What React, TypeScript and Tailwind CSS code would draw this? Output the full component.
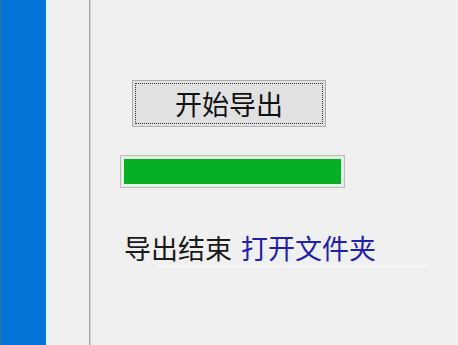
import React from "react";

export default function App() {
  const font = { fontFamily: '"Noto Sans CJK SC", "Microsoft YaHei", sans-serif' };
  return (
    <div className="flex w-[458px] h-[345px] bg-[#f0f0f0] overflow-hidden" style={font}>
      <div className="w-[1px] h-full bg-[#3a6f8f]" />
      <div className="w-[45px] h-full bg-[#0474d9]" />
      <div className="w-[4px] h-full bg-[#e3f5fb]" />
      <div className="w-[39px] h-full bg-[#f0f0f0]" />
      <div className="w-[1px] h-full bg-[#a6a6a6]" />
      <div className="w-[1px] h-full bg-[#d4d4d4]" />
      <div className="flex-1 flex flex-col pt-[80px]">
        <div className="ml-[41px] w-[194px] h-[47px] border border-[#adadad] bg-[#e1e1e1] p-[2px]">
          <div className="w-full h-full border border-dotted border-[#333] flex items-center justify-center text-[27px] leading-none text-[#111]">
            开始导出
          </div>
        </div>
        <div className="ml-[29px] mt-[28px] w-[225px] h-[33px] border border-[#bcbcbc] bg-[#e6e6e6] p-[1px]">
          <div className="w-full h-full border-2 border-[#e6f7e6] bg-[#06b025]" />
        </div>
        <div className="ml-[33px] mt-[44px] flex items-center text-[27px] leading-[32px] whitespace-nowrap">
          <span className="text-[#1a1a1a]">导出结束</span>
          <span className="ml-[9px] text-[#2222a8]">打开文件夹</span>
        </div>
        <div className="ml-[64px] mt-[2px] w-[273px] h-[1px] bg-[#fafafa]" />
      </div>
    </div>
  );
}
